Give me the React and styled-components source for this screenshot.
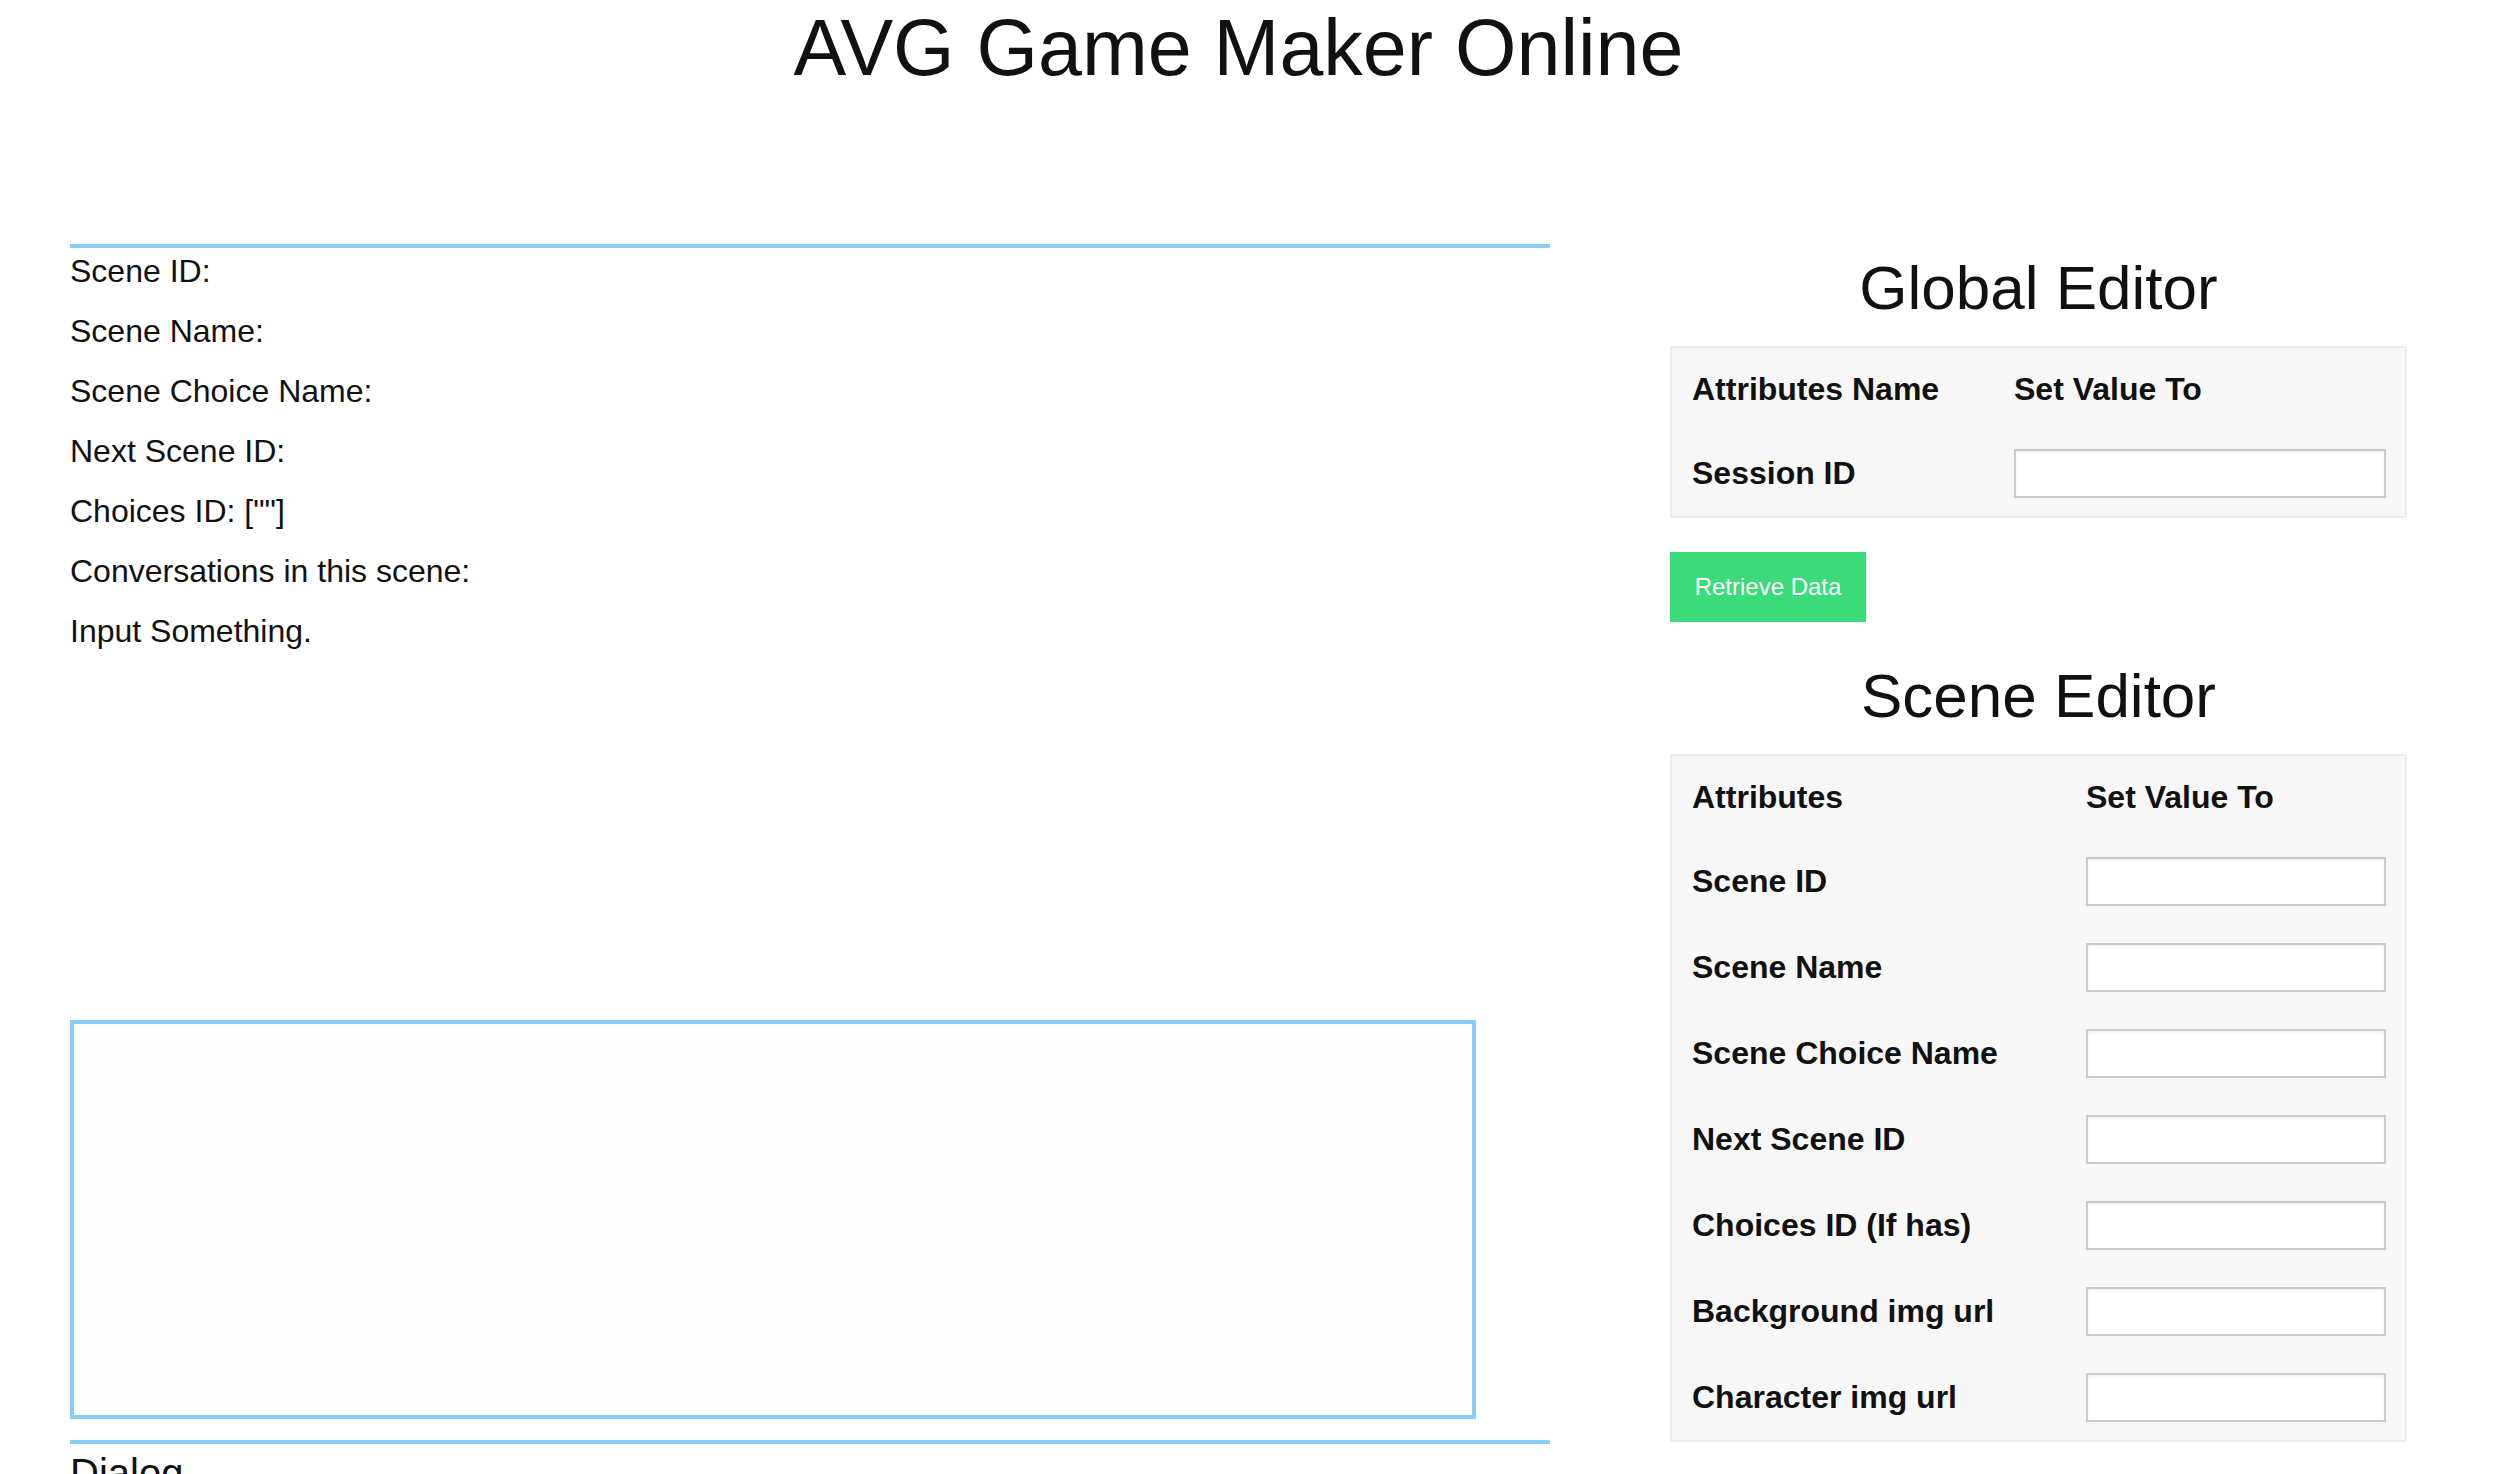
import React from 'react';
import styled, { createGlobalStyle } from 'styled-components';

const GlobalStyle = createGlobalStyle`
  html, body {
    margin: 0;
    padding: 0;
    background: #ffffff;
  }
  body {
    font-family: "Liberation Sans", Arial, Helvetica, sans-serif;
    color: #111111;
  }
`;

const Page = styled.div`
  width: 2337px;
  padding-left: 70px;
`;

const Title = styled.h1`
  margin: 3px 0 0;
  font-size: 79px;
  font-weight: 400;
  line-height: 90px;
  text-align: center;
`;

const Columns = styled.div`
  display: grid;
  grid-template-columns: 1480px 737px;
  column-gap: 120px;
  margin-top: 151px;
  align-items: start;
`;

const LeftCol = styled.div`
  display: flex;
  flex-direction: column;
`;

const Rule = styled.div`
  height: 4px;
  background: #87cefa;
  margin-top: ${p => p.$gap || 0}px;
`;

const InfoList = styled.div`
  display: flex;
  flex-direction: column;
  gap: 20px;
  padding-top: 3px;
`;

const InfoLine = styled.div`
  font-size: 32px;
  line-height: 40px;
`;

const DialogBox = styled.div`
  box-sizing: border-box;
  width: 1406px;
  height: 399px;
  margin-top: 369px;
  border: 4px solid #87cefa;
  background: #fefefe;
`;

const DialogLabel = styled.h3`
  margin: 5px 0 0;
  font-size: 40px;
  font-weight: 400;
  line-height: 48px;
`;

const RightCol = styled.div`
  display: flex;
  flex-direction: column;
  align-items: stretch;
  padding-top: 8px;
`;

const SectionTitle = styled.h2`
  margin: 0 0 22px;
  font-size: 62px;
  font-weight: 400;
  line-height: 72px;
  text-align: center;
`;

const EditorTable = styled.div`
  border: 2px solid #ececec;
  background: #f7f7f7;
  padding: 0 19px 0 20px;
`;

const Row = styled.div`
  display: grid;
  grid-template-columns: ${p => p.$label}px 1fr;
  align-items: center;
  height: ${p => (p.$head ? 82 : 86)}px;
  font-size: 32px;
  font-weight: 700;
  line-height: 40px;
  color: #111;
`;

const ValueInput = styled.input`
  box-sizing: border-box;
  width: 100%;
  height: 49px;
  border: 2px solid #cbcbcb;
  background: #ffffff;
  box-shadow: inset 0 2px 3px rgba(0, 0, 0, 0.06);
  outline: none;
  padding: 0 8px;
  font-size: 24px;
  font-family: inherit;
`;

const RetrieveButton = styled.button`
  align-self: flex-start;
  width: 196px;
  height: 70px;
  margin: 34px 0 38px;
  border: none;
  background: #3cdb7a;
  color: #ffffff;
  font-family: "Liberation Sans", Arial, sans-serif;
  font-size: 24px;
  padding: 0;
  cursor: pointer;
`;

const sceneInfo = [
  'Scene ID:',
  'Scene Name:',
  'Scene Choice Name:',
  'Next Scene ID:',
  'Choices ID: [""]',
  'Conversations in this scene:',
  'Input Something.',
];

const sceneFields = [
  'Scene ID',
  'Scene Name',
  'Scene Choice Name',
  'Next Scene ID',
  'Choices ID (If has)',
  'Background img url',
  'Character img url',
];

export default function App() {
  return (
    <Page>
      <GlobalStyle />
      <Title>AVG Game Maker Online</Title>
      <Columns>
        <LeftCol>
          <Rule />
          <InfoList>
            {sceneInfo.map(line => (
              <InfoLine key={line}>{line}</InfoLine>
            ))}
          </InfoList>
          <DialogBox />
          <Rule $gap={21} />
          <DialogLabel>Dialog</DialogLabel>
        </LeftCol>

        <RightCol>
          <SectionTitle>Global Editor</SectionTitle>
          <EditorTable>
            <Row $head $label={322}>
              <span>Attributes Name</span>
              <span>Set Value To</span>
            </Row>
            <Row $label={322}>
              <span>Session ID</span>
              <ValueInput type="text" />
            </Row>
          </EditorTable>
          <RetrieveButton>Retrieve Data</RetrieveButton>

          <SectionTitle>Scene Editor</SectionTitle>
          <EditorTable>
            <Row $head $label={394}>
              <span>Attributes</span>
              <span>Set Value To</span>
            </Row>
            {sceneFields.map(f => (
              <Row key={f} $label={394}>
                <span>{f}</span>
                <ValueInput type="text" />
              </Row>
            ))}
          </EditorTable>
        </RightCol>
      </Columns>
    </Page>
  );
}
